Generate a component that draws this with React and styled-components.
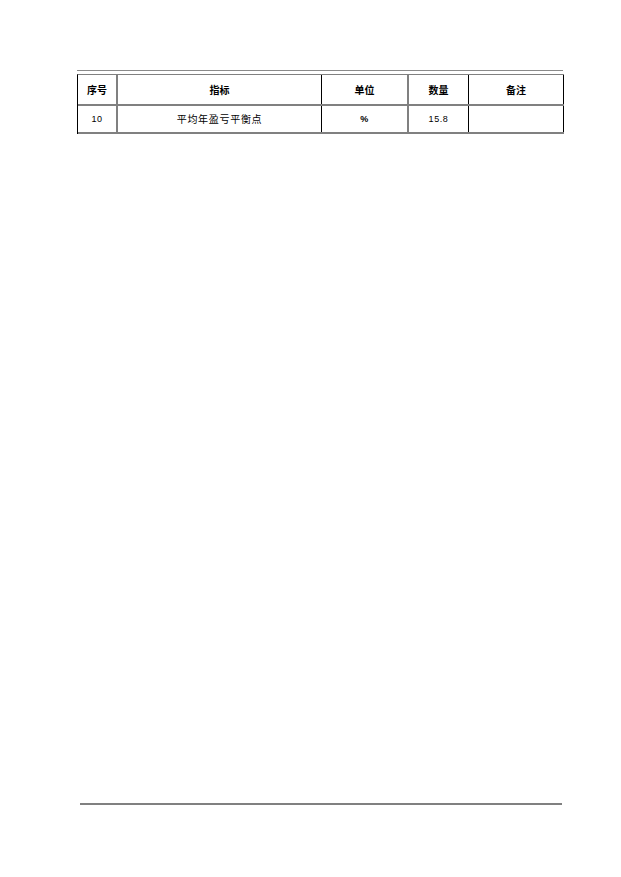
import React from 'react';
import styled, { createGlobalStyle } from 'styled-components';

const GlobalStyle = createGlobalStyle`
  html, body {
    margin: 0;
    padding: 0;
    background: #ffffff;
  }
  body {
    font-family: "Noto Sans CJK SC", "Liberation Sans", sans-serif;
    color: #000;
  }
`;

const Page = styled.div`
  width: 621px;
  height: 877px;
  box-sizing: border-box;
  padding: 70px 0 72px 77px;
  display: flex;
  flex-direction: column;
`;

const HeaderRule = styled.div`
  width: 486px;
  height: 1px;
  background: #8a8a8a;
  margin-bottom: 3px;
`;

const Table = styled.div`
  width: 487px;
  border-top: 1px solid #808080;
  border-left: 1px solid #000;
  box-sizing: border-box;
`;

const Row = styled.div`
  display: grid;
  grid-template-columns: 40px 204px 87px 60px 95px;
  box-sizing: border-box;
  height: ${(p) => p.$height}px;
  border-bottom: 2px solid #808080;
`;

const Cell = styled.div`
  display: flex;
  align-items: center;
  justify-content: center;
  box-sizing: border-box;
  border-right: ${(p) => (p.$soft ? '2px solid #808080' : '1px solid #000')};
  font-size: 10px;
  line-height: 1;
  font-weight: ${(p) => (p.$head ? 700 : 400)};
  letter-spacing: ${(p) => (p.$spaced ? '0.7px' : '0')};
`;

const Num = styled.span`
  font-family: "Liberation Sans", sans-serif;
  font-size: 9px;
  letter-spacing: 0.6px;
`;

const FooterRule = styled.div`
  margin-top: auto;
  margin-left: 3px;
  width: 482px;
  height: 2px;
  background: #808080;
`;

const columns = [
  { key: 'no', title: '序号', soft: true },
  { key: 'name', title: '指标' },
  { key: 'unit', title: '单位', soft: true },
  { key: 'qty', title: '数量' },
  { key: 'note', title: '备注' },
];

const App = () => {
  return (
    <Page>
      <GlobalStyle />
      <HeaderRule />
      <Table>
        <Row $height={31}>
          {columns.map((c) => (
            <Cell key={c.key} $head $soft={c.soft}>
              {c.title}
            </Cell>
          ))}
        </Row>
        <Row $height={28}>
          <Cell $soft><Num>10</Num></Cell>
          <Cell $spaced>平均年盈亏平衡点</Cell>
          <Cell $soft $head><Num>%</Num></Cell>
          <Cell><Num>15.8</Num></Cell>
          <Cell />
        </Row>
      </Table>
      <FooterRule />
    </Page>
  );
};

export default App;
